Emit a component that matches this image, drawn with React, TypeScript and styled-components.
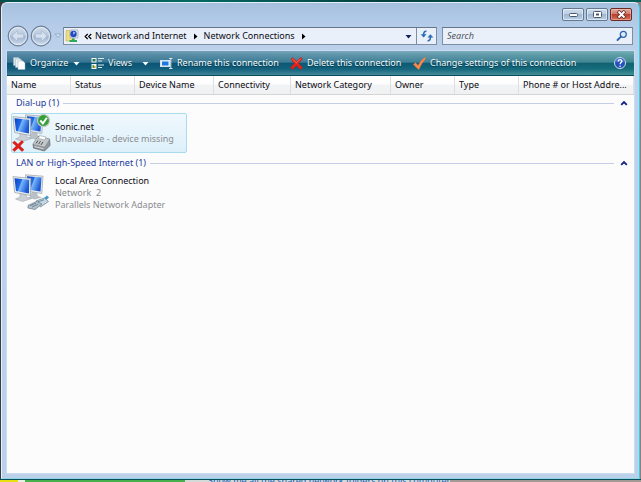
import React from "react";
import styled, { createGlobalStyle, css } from "styled-components";

const GlobalStyle = createGlobalStyle`
  *, *::before, *::after { box-sizing: border-box; }
  html, body { margin: 0; padding: 0; }
  body, button, input {
    font-family: "Noto Sans", "Open Sans", sans-serif;
    font-size: 9px;
    line-height: 12px;
  }
  button { border: 0; margin: 0; padding: 0; background: none; color: inherit; }
`;

const Desktop = styled.div`
  height: 100vh;
  display: flex;
  flex-direction: column;
  overflow: hidden;
  background: linear-gradient(90deg, #3a3d42 0, #3a3d42 50%, #8d7f80 100%);
`;

const Wallpaper = styled.div`
  height: 2px;
  flex: none;
  background: linear-gradient(90deg, #04504a, #056a63 30%, #04403f 60%, #07605c);
`;

const WindowFrame = styled.main`
  flex: 1;
  min-height: 0;
  margin: 0 1px;
  padding: 0 5px 5px;
  display: flex;
  flex-direction: column;
  border: 1px solid #e4f0fb;
  border-right-color: #35cfe6;
  border-bottom-color: #8fd6ea;
  border-radius: 6px 6px 0 0;
  background: linear-gradient(180deg, #a5c0de 0, #b4cce8 22px, #bdd2ec 50px, #bbd1ea 100%);
`;

const TitleBar = styled.header`
  flex: none;
  height: 23px;
  display: flex;
  justify-content: flex-end;
  align-items: flex-start;
  gap: 2px;
  padding: 5px 2px 0 0;
`;

const CaptionButton = styled.button<{ $close?: boolean }>`
  width: 22px;
  height: 13px;
  display: flex;
  align-items: center;
  justify-content: center;
  border: 1px solid #66788f;
  border-radius: 2px;
  box-shadow: inset 0 0 0 1px rgba(255, 255, 255, 0.5);
  background: linear-gradient(180deg, #cddcec 0, #bccfe4 50%, #9fb7d2 50%, #b9d0e8 100%);
  ${(p) =>
    p.$close &&
    css`
      border-color: #6b2a26;
      background: linear-gradient(180deg, #e3a89c 0, #d07566 50%, #b8402c 50%, #d4745a 100%);
      box-shadow: inset 0 0 0 1px rgba(255, 220, 210, 0.4);
    `}
`;

const NavRow = styled.nav`
  flex: none;
  height: 20px;
  display: flex;
  align-items: center;
  padding-right: 1px;
`;

const TravelButtons = styled.div`
  flex: none;
  width: 56px;
  display: flex;
  align-items: center;
`;

const RoundButton = styled.button`
  width: 23px;
  height: 22px;
  flex: none;
  svg { display: block; }
`;

const HistoryButton = styled.button`
  width: 10px;
  height: 12px;
  display: grid;
  place-items: center;
`;

const fieldStyle = css`
  height: 18px;
  display: flex;
  align-items: center;
  border: 1px solid #7f8fa3;
  border-top-color: #66758a;
  background: #e9f0f9;
`;

const AddressBar = styled.div`
  ${fieldStyle}
  flex: 1;
  min-width: 0;
`;

const AddressIcon = styled.span`
  flex: none;
  width: 16px;
  display: grid;
  place-items: center;
`;

const Crumb = styled.a`
  color: #0c0c14;
  text-decoration: none;
  white-space: nowrap;
`;

const CrumbArrow = styled.button<{ $wide?: boolean }>`
  width: ${(p) => (p.$wide ? 15 : 17)}px;
  height: 16px;
  flex: none;
  display: grid;
  place-items: center;
  color: #000;
`;

const DropButton = styled.button`
  width: 16px;
  height: 16px;
  margin-left: auto;
  display: grid;
  place-items: center;
`;

const RefreshButton = styled.button`
  width: 20px;
  height: 16px;
  border-left: 1px solid #7f8fa3;
  display: grid;
  place-items: center;
`;

const SearchBox = styled.label`
  ${fieldStyle}
  flex: 0 1 191px;
  min-width: 0;
  margin-left: 5px;
  padding: 0 4px;
`;

const SearchInput = styled.input`
  flex: 1;
  min-width: 0;
  padding: 0;
  border: 0;
  outline: 0;
  background: transparent;
  font-style: italic;
  &::placeholder { color: #4f5560; opacity: 1; }
`;

const Panel = styled.section`
  flex: 1;
  min-height: 0;
  margin-top: 5px;
  display: flex;
  flex-direction: column;
  background: #fcfcfc;
  box-shadow: 0 0 0 1px #cbdcf0;
`;

const CommandBar = styled.div`
  flex: none;
  height: 25px;
  display: flex;
  align-items: center;
  padding: 0 7px 0 6px;
  border-bottom: 1px solid #0d4a5e;
  background:
    linear-gradient(90deg, rgba(10, 60, 120, 0.3) 0, rgba(10, 70, 120, 0.14) 60%, rgba(30, 130, 110, 0.2) 100%),
    linear-gradient(180deg, #8fbccb 0, #6fa5b4 15%, #4a8a9c 46%, #0d5c74 52%, #156a7e 75%, #50969f 100%);
`;

const Command = styled.button<{ $width: number }>`
  flex: none;
  width: ${(p) => p.$width}px;
  height: 22px;
  display: flex;
  align-items: center;
  gap: 4px;
  color: #f2fafc;
  text-shadow: 0 1px 1px #063646;
  white-space: nowrap;
  svg { flex: none; }
`;

const CommandArrow = styled.span`
  margin: 0 11px 0 auto;
  display: grid;
  place-items: center;
`;

const HelpButton = styled.button`
  margin-left: auto;
  width: 14px;
  height: 14px;
  svg { display: block; }
`;

const ColumnTable = styled.table`
  flex: none;
  width: 100%;
  table-layout: fixed;
  border-collapse: separate;
  border-spacing: 0;
  background: linear-gradient(180deg, #fff 0, #fdfdfe 45%, #f2f3f5 50%, #f0f1f3 100%);
  border-bottom: 1px solid #d5d5d5;
`;

const Column = styled.col<{ $width?: number }>`
  width: ${(p) => (p.$width ? `${p.$width}px` : "auto")};
`;

const ColumnHead = styled.th`
  height: 18px;
  padding: 0 4px;
  border-right: 1px solid #dedfe1;
  font-weight: 400;
  text-align: left;
  white-space: nowrap;
  color: #0c0c14;
`;

const Content = styled.div`
  flex: 1;
  min-height: 0;
  padding: 1px 4px 0;
`;

const GroupHeader = styled.h2`
  height: 14px;
  margin: 0;
  padding: 0 2px 0 5px;
  display: flex;
  align-items: center;
  font-size: 9px;
  font-weight: 400;
  color: #1a3a9c;
  white-space: nowrap;
  &::after {
    content: "";
    order: 1;
    flex: 1;
    height: 1px;
    margin-left: 4px;
    background: #c3cde6;
  }
`;

const CollapseButton = styled.button`
  order: 2;
  width: 8px;
  height: 10px;
  margin-left: 6px;
  display: grid;
  place-items: center;
`;

const Item = styled.article<{ $selected?: boolean }>`
  width: 176px;
  min-height: 40px;
  margin: 3px 0;
  display: flex;
  align-items: center;
  gap: 4px;
  border: 1px solid transparent;
  border-radius: 2px;
  ${(p) =>
    p.$selected &&
    css`
      border-color: #a9dcee;
      background: linear-gradient(180deg, #f0f8fd 0, #ddf0fa 100%);
    `}
`;

const ItemIcon = styled.span`
  flex: none;
  width: 39px;
  height: 38px;
  svg { display: block; }
`;

const ItemTitle = styled.h3`
  margin: 0;
  font-size: 9px;
  font-weight: 400;
  color: #0c0c14;
`;

const ItemLine = styled.p`
  margin: 0;
  color: #8a8c90;
  white-space: pre;
`;

const Behind = styled.div`
  flex: none;
  height: 3px;
  padding-left: 208px;
  overflow: hidden;
  border-top: 1px solid #0a4e5a;
  font-size: 9px;
  line-height: 2px;
  white-space: nowrap;
  color: #1263b8;
  background: linear-gradient(90deg, #e8e010 0 18px, #e8efe4 18px 25px, #45b04c 25px 185px, #d4dad8 185px 450px, #a39a96 450px);
`;

function Triangle({ dir, color }: { dir: "down" | "right"; color: string }) {
  return (
    <svg width="7" height="7" viewBox="0 0 7 7" aria-hidden="true">
      <path d={dir === "down" ? "M0.5 2h6L3.5 5.5z" : "M2 0.5v6L5.5 3.5z"} fill={color} />
    </svg>
  );
}

function TravelIcon({ forward }: { forward?: boolean }) {
  const id = forward ? "fwd" : "back";
  return (
    <svg width="22" height="22" viewBox="0 0 22 22" aria-hidden="true">
      <defs>
        <linearGradient id={id} x1="0" y1="0" x2="0" y2="1">
          <stop offset="0" stopColor="#d3deeb" />
          <stop offset="0.48" stopColor="#b6c7dc" />
          <stop offset="0.52" stopColor="#9fb4ce" />
          <stop offset="1" stopColor="#cfdef0" />
        </linearGradient>
      </defs>
      <circle cx="11" cy="11" r="9.8" fill={`url(#${id})`} stroke="#6f8098" strokeWidth="1.2" />
      <circle cx="11" cy="11" r="8.5" fill="none" stroke="#e6eef7" strokeWidth="0.9" />
      <path
        d="M10.5 5.5L5 11l5.500 5.500v-3.500h6v-4h-6z"
        fill="#d5e1ef"
        stroke="#a4b7ce"
        strokeWidth="0.6"
        transform={forward ? "rotate(180 11 11)" : undefined}
      />
    </svg>
  );
}

function PlaceIcon() {
  return (
    <svg width="14" height="14" viewBox="0 0 14 14" aria-hidden="true">
      <path d="M1 1.500h4l1 1h3v9.500H1z" fill="#f0dc82" stroke="#c9ae4a" strokeWidth="0.6" />
      <rect x="5" y="1" width="8" height="8" rx="1" fill="#dfe7f0" stroke="#8794a8" strokeWidth="0.6" />
      <circle cx="8.500" cy="5" r="3.200" fill="#2348c0" />
      <path d="M8 2.500l2.500 1-2 2.500z" fill="#9dbcf6" />
      <path d="M7 9.500h2.500v1.500H12v2H4.500v-2H7z" fill="#2faa5c" />
    </svg>
  );
}

function RefreshIcon() {
  return (
    <svg width="14" height="12" viewBox="0 0 14 12" aria-hidden="true" fill="none" stroke="#2a6cb8" strokeWidth="1.600">
      <path d="M6.500 1.200C4.500 1 3.600 2.200 3.600 5" />
      <path d="M0.600 4.200h6L3.600 7.600z" fill="#2a6cb8" stroke="none" />
      <path d="M7.500 10.800c2 .2 2.900-1 2.900-4" />
      <path d="M7.400 7.600h6L10.400 4.200z" fill="#2a6cb8" stroke="none" />
    </svg>
  );
}

function SearchIcon() {
  return (
    <svg width="12" height="12" viewBox="0 0 12 12" aria-hidden="true" fill="none">
      <circle cx="7.300" cy="4.300" r="3" stroke="#2d62ad" strokeWidth="1.300" fill="#dcebfa" />
      <path d="M5 6.600L1.500 10" stroke="#2d62ad" strokeWidth="1.800" strokeLinecap="round" />
    </svg>
  );
}

function OrganizeIcon() {
  return (
    <svg width="13" height="13" viewBox="0 0 13 13" aria-hidden="true" stroke="#9db4bf" strokeWidth="0.500">
      <path d="M0.500 0.500h5l1.500 1.500v6.500H0.500z" fill="#dbe6ea" />
      <path d="M2.500 2h5l1.500 1.500V10.500H2.500z" fill="#eaf1f3" />
      <path d="M5 4h5l2 2v6.500H5z" fill="#fff" />
    </svg>
  );
}

function ViewsIcon() {
  return (
    <svg width="13" height="13" viewBox="0 0 13 13" aria-hidden="true">
      <rect x="0.500" y="1" width="5" height="4.500" fill="#f4f7f8" />
      <rect x="1.500" y="2" width="3" height="2.500" fill="#2f7a58" />
      <rect x="0.500" y="7" width="5" height="5" fill="#f4f7f8" />
      <rect x="1.500" y="8" width="1.500" height="3" fill="#4aa02c" />
      <rect x="3" y="9" width="1.500" height="2" fill="#d8a020" />
      <path d="M7 1.500h6M7 4h4M7 8h6M7 10.500h4" stroke="#dbe8ec" strokeWidth="1" />
    </svg>
  );
}

function RenameIcon() {
  return (
    <svg width="13" height="11" viewBox="0 0 13 11" aria-hidden="true">
      <rect x="0.500" y="2.500" width="9.500" height="6" fill="#e8f2fa" stroke="#d5e3ee" />
      <rect x="2" y="3.500" width="6.500" height="4" fill="#1c78e0" />
      <path d="M9 0.500h3.500M9 10.500h3.500M10.800 0.500v10" stroke="#d5dfe4" />
    </svg>
  );
}

function CrossIcon({ size }: { size: number }) {
  return (
    <svg width={size} height={size} viewBox="0 0 13 13" aria-hidden="true">
      <path
        d="M1 2.200L2.800 0.800 6.500 4.600 10.800 0.600 12.200 1.800 8.500 6.400 12.400 10.800 10.400 12.400 6.400 8.500 2.400 12.400 0.600 10.800 4.500 6.400z"
        fill="#e8241a"
        stroke="#c81812"
        strokeWidth="0.700"
      />
      <path d="M2.200 2l4.200 3.800L10.800 1.800" fill="none" stroke="#f4827a" strokeWidth="0.800" />
    </svg>
  );
}

function CheckIcon() {
  return (
    <svg width="13" height="13" viewBox="0 0 13 13" aria-hidden="true">
      <path d="M0.300 7.500L2.600 5.600 5 8.400Q8 3 11.800 0.200L12.800 1.500Q8.800 6 5.700 12.800z" fill="#f98a4e" stroke="#e06a30" strokeWidth="0.400" />
    </svg>
  );
}

function HelpIcon() {
  return (
    <svg width="14" height="14" viewBox="0 0 14 14" aria-hidden="true">
      <circle cx="7" cy="7" r="5.500" fill="#2450b8" stroke="#c9dcec" />
      <path d="M2.500 6a4.500 4 0 0 1 9 0z" fill="#5f8be0" opacity="0.600" />
      <path d="M5.200 5.500C5.200 3 9 3.200 8.900 5.400 8.800 6.600 7.100 6.700 7.100 8.300" fill="none" stroke="#fff" strokeWidth="1.300" />
      <circle cx="7.100" cy="10.200" r="0.800" fill="#fff" />
    </svg>
  );
}

function ComputersIcon({ device }: { device: "modem" | "cable" }) {
  const screen = `screen-${device}`;
  return (
    <svg width="40" height="38" viewBox="0 0 40 38" aria-hidden="true">
      <defs>
        <linearGradient id={screen} x1="0" y1="0" x2="1" y2="0.400">
          <stop offset="0" stopColor="#0c3fc0" />
          <stop offset="0.450" stopColor="#1f6ae6" />
          <stop offset="0.520" stopColor="#7ab8fa" />
          <stop offset="1" stopColor="#1a58d6" />
        </linearGradient>
      </defs>
      <path d="M20 18l5 .5 1 3.500 4 1.500-7 2-6-1.500z" fill="#b9c0c6" />
      <path d="M13.500 0.800L31 2.200 29.800 19.500 14 17z" fill="#e6eaec" stroke="#98a1a9" strokeWidth="0.700" />
      <path d="M15 2.300L29.500 3.500 28.500 17.600 15 15.500z" fill={`url(#${screen})`} />
      <path d="M8 19l6 1 .5 3 5 1.500-9 3-7-2.500 4.500-2z" fill="#cbd0d4" stroke="#969da4" strokeWidth="0.500" />
      <path d="M1 2.600L18.800 4.400 18.500 21.500 2.600 18.500z" fill="#eceff0" stroke="#929ba3" strokeWidth="0.700" />
      <path d="M2.500 4.200L17.200 5.700 17 19.500 4 17z" fill={`url(#${screen})`} />
      {device === "modem" ? (
        <>
          <path d="M21 30L26 22.500 37.500 25 38 31.500 32.500 37 21.500 34z" fill="#8f959a" stroke="#5c6368" strokeWidth="0.700" />
          <path d="M21 30L26 22.500 37.500 25 32.500 32.800z" fill="#c3c8cb" />
          <path d="M27.500 21.500l6.500 1.500-1 3-6.500-1.500z" fill="#fff" stroke="#7f868b" strokeWidth="0.500" />
          <path d="M24 29.500l2-3M26.500 30.200l2-3M29 30.900l2-3" stroke="#4a5156" strokeWidth="1" />
          <path d="M22.500 32.500l9 2.300" stroke="#dfe4e8" strokeWidth="0.900" />
          <circle cx="31.500" cy="6.500" r="6" fill="#35a03a" stroke="#c4c9c4" strokeWidth="1.200" />
          <path d="M28.300 6.500l2.600 2.900 4-5.600" fill="none" stroke="#fff" strokeWidth="1.900" />
          <path d="M0.500 28.700l2-1.600 3.500 3.200 3.800-3.900 1.800 1.700L8.100 32l3.900 3.800-2 1.700-3.700-3.600L2.500 37.600l-2-1.800L4.200 32z" fill="#e02018" stroke="#b81410" strokeWidth="0.400" />
        </>
      ) : (
        <>
          <path d="M36 22.500L31 27" stroke="#3f9ad0" strokeWidth="3" />
          <path d="M24 27l8.500-3 4 3.500-8 5.500z" fill="#c3d8e4" stroke="#64788a" strokeWidth="0.700" />
          <path d="M16 31.500l8.500-4 5.500 2.500-7 5.500-7-1.500z" fill="#b4c2cc" stroke="#64788a" strokeWidth="0.700" />
          <path d="M18 31.700l6-2.500M20 33l6-2.700M26 27.800l6-2" stroke="#5c7486" strokeWidth="0.800" />
        </>
      )}
    </svg>
  );
}

function Chevron() {
  return (
    <svg width="8" height="6" viewBox="0 0 8 6" aria-hidden="true">
      <path d="M1.200 4.800L4 2l2.800 2.800" fill="none" stroke="#14248c" strokeWidth="1.900" />
    </svg>
  );
}

const columns: { label: string; width?: number }[] = [
  { label: "Name", width: 64 },
  { label: "Status", width: 64 },
  { label: "Device Name", width: 79 },
  { label: "Connectivity", width: 77 },
  { label: "Network Category", width: 100 },
  { label: "Owner", width: 64 },
  { label: "Type", width: 64 },
  { label: "Phone # or Host Addre..." },
];

const commands = [
  { label: "Organize", width: 78, icon: <OrganizeIcon />, menu: true },
  { label: "Views", width: 69, icon: <ViewsIcon />, menu: true },
  { label: "Rename this connection", width: 130, icon: <RenameIcon /> },
  { label: "Delete this connection", width: 123, icon: <CrossIcon size={13} /> },
  { label: "Change settings of this connection", width: 170, icon: <CheckIcon /> },
];

const groups = [
  {
    name: "Dial-up (1)",
    title: "Sonic.net",
    lines: ["Unavailable - device missing"],
    device: "modem" as const,
    selected: true,
  },
  {
    name: "LAN or High-Speed Internet (1)",
    title: "Local Area Connection",
    lines: ["Network  2", "Parallels Network Adapter"],
    device: "cable" as const,
    selected: false,
  },
];

export default function App() {
  return (
    <Desktop>
      <GlobalStyle />
      <Wallpaper />
      <WindowFrame>
        <TitleBar>
          <CaptionButton aria-label="Minimize">
            <svg width="11" height="7" viewBox="0 0 11 7">
              <rect x="1.500" y="2.500" width="8" height="3" rx="1" fill="#fff" stroke="#4b586b" />
            </svg>
          </CaptionButton>
          <CaptionButton aria-label="Maximize">
            <svg width="11" height="9" viewBox="0 0 11 9">
              <rect x="1.500" y="1.500" width="8" height="6" rx="1" fill="#fff" stroke="#4b586b" />
              <rect x="4" y="3.500" width="3" height="2" fill="#4b586b" />
            </svg>
          </CaptionButton>
          <CaptionButton $close aria-label="Close">
            <svg width="11" height="9" viewBox="0 0 11 9">
              <path d="M2 1l7 7M9 1L2 8" stroke="#5c2a2a" strokeWidth="3.400" />
              <path d="M2.500 1.500l6 6M8.500 1.500l-6 6" stroke="#fff" strokeWidth="1.900" />
            </svg>
          </CaptionButton>
        </TitleBar>
        <NavRow>
          <TravelButtons>
            <RoundButton aria-label="Back">
              <TravelIcon />
            </RoundButton>
            <RoundButton aria-label="Forward">
              <TravelIcon forward />
            </RoundButton>
            <HistoryButton aria-label="Recent pages">
              <svg width="8" height="6" viewBox="0 0 8 6">
                <path d="M1 1h6L4 4.500z" fill="#dbe6f3" stroke="#8ba0bb" strokeWidth="0.800" />
              </svg>
            </HistoryButton>
          </TravelButtons>
          <AddressBar>
            <AddressIcon>
              <PlaceIcon />
            </AddressIcon>
            <CrumbArrow $wide aria-label="Parent folders">
              <svg width="8" height="7" viewBox="0 0 8 7">
                <path d="M3.700 1L1.200 3.500l2.500 2.500M7.200 1L4.700 3.500l2.500 2.500" fill="none" stroke="#000" strokeWidth="1.200" />
              </svg>
            </CrumbArrow>
            <Crumb href="#network">Network and Internet</Crumb>
            <CrumbArrow aria-label="Network and Internet items">
              <Triangle dir="right" color="#000" />
            </CrumbArrow>
            <Crumb href="#connections">Network Connections</Crumb>
            <CrumbArrow aria-label="Network Connections items">
              <Triangle dir="right" color="#000" />
            </CrumbArrow>
            <DropButton aria-label="Previous locations">
              <Triangle dir="down" color="#14205c" />
            </DropButton>
            <RefreshButton aria-label="Refresh">
              <RefreshIcon />
            </RefreshButton>
          </AddressBar>
          <SearchBox>
            <SearchInput type="text" placeholder="Search" aria-label="Search" />
            <SearchIcon />
          </SearchBox>
        </NavRow>
        <Panel>
          <CommandBar>
            {commands.map((c) => (
              <Command key={c.label} $width={c.width}>
                {c.icon}
                {c.label}
                {c.menu && (
                  <CommandArrow>
                    <Triangle dir="down" color="#f2fafc" />
                  </CommandArrow>
                )}
              </Command>
            ))}
            <HelpButton aria-label="Help">
              <HelpIcon />
            </HelpButton>
          </CommandBar>
          <ColumnTable>
            <colgroup>
              {columns.map((c) => (
                <Column key={c.label} $width={c.width} />
              ))}
            </colgroup>
            <thead>
              <tr>
                {columns.map((c) => (
                  <ColumnHead key={c.label} scope="col">
                    {c.label}
                  </ColumnHead>
                ))}
              </tr>
            </thead>
          </ColumnTable>
          <Content>
            {groups.map((g) => (
              <section key={g.name}>
                <GroupHeader>
                  {g.name}
                  <CollapseButton aria-label={`Collapse ${g.name}`}>
                    <Chevron />
                  </CollapseButton>
                </GroupHeader>
                <Item $selected={g.selected}>
                  <ItemIcon>
                    <ComputersIcon device={g.device} />
                  </ItemIcon>
                  <div>
                    <ItemTitle>{g.title}</ItemTitle>
                    {g.lines.map((line) => (
                      <ItemLine key={line}>{line}</ItemLine>
                    ))}
                  </div>
                </Item>
              </section>
            ))}
          </Content>
        </Panel>
      </WindowFrame>
      <Behind>Show me all the shared network folders on this computer</Behind>
    </Desktop>
  );
}
